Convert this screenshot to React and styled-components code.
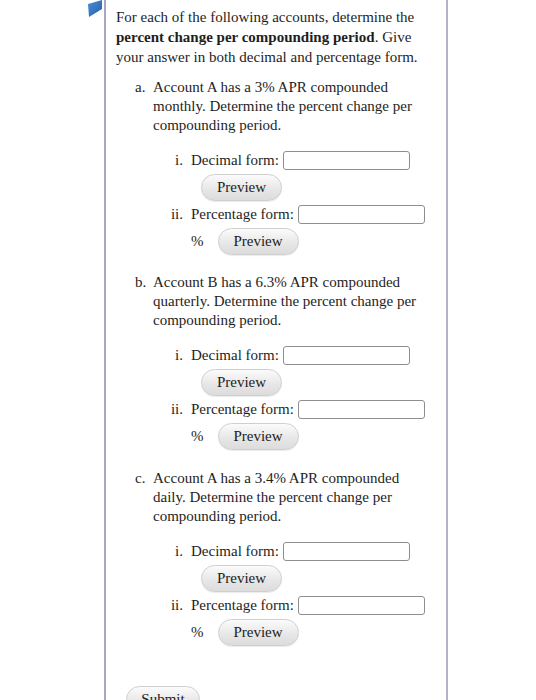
import styled, { createGlobalStyle } from "styled-components";

const GlobalStyle = createGlobalStyle`
  html, body {
    margin: 0;
    padding: 0;
    background: #ffffff;
  }
  body {
    font-family: "Liberation Serif", "Times New Roman", serif;
    font-size: 15px;
    color: #1e1e1e;
  }
`;

const Page = styled.div`
  display: flex;
  align-items: flex-start;
  padding-left: 88px;
  min-height: 700px;
`;

const CornerFlag = styled.svg`
  display: block;
  width: 14px;
  height: 18px;
  margin-right: 2px;
  flex-shrink: 0;
`;

const Panel = styled.div`
  width: 312px;
  min-height: 760px;
  padding: 0 18px 0 10px;
  border-left: 2px solid #a7a7c2;
  border-right: 2px solid #b3b3c6;
`;

const Question = styled.p`
  margin: 7px 0 0;
  line-height: 20px;
`;

const ItemList = styled.ol`
  list-style: none;
  margin: 10.5px 0 0;
  padding: 0 0 0 19px;
`;

const Item = styled.li`
  display: flex;
  margin-bottom: 18.5px;
`;

const ItemLetter = styled.span`
  width: 18px;
  flex-shrink: 0;
  line-height: 19px;
`;

const ItemBody = styled.div`
  flex: 1;
`;

const ItemText = styled.div`
  line-height: 19px;
`;

const SubList = styled.div`
  margin-top: 12px;
`;

const SubRow = styled.div`
  display: flex;
  align-items: center;
  height: 27px;
  padding-left: ${(p) => p.$indent || 0}px;
`;

const SubMarker = styled.span`
  width: 30px;
  margin-right: 8px;
  text-align: right;
  flex-shrink: 0;
`;

const AnswerBox = styled.input`
  box-sizing: border-box;
  width: 127px;
  height: 19px;
  margin: 0 0 0 4px;
  padding: 0 3px;
  border: 1px solid #8e8e8e;
  border-radius: 3px;
  background: #fff;
  font: inherit;
`;

const Percent = styled.span`
  margin-right: 14px;
`;

const PillButton = styled.button`
  box-sizing: border-box;
  width: ${(p) => p.$width || 81}px;
  height: 27px;
  padding: 0;
  border: 1px solid #cfcfcf;
  border-radius: 14px;
  background: linear-gradient(#fbfbfb, #e6e6e6 60%, #dcdcdc);
  font-family: "Liberation Serif", "Times New Roman", serif;
  font-size: 15px;
  color: #222;
  box-shadow: 0 1px 1px rgba(0, 0, 0, 0.08);
`;

const SubmitRow = styled.div`
  margin-top: 40px;
  padding-left: 10px;
`;

const items = [
  {
    letter: "a.",
    text: "Account A has a 3% APR compounded monthly. Determine the percent change per compounding period.",
  },
  {
    letter: "b.",
    text: "Account B has a 6.3% APR compounded quarterly. Determine the percent change per compounding period.",
  },
  {
    letter: "c.",
    text: "Account A has a 3.4% APR compounded daily. Determine the percent change per compounding period.",
  },
];

function AccountItem({ letter, text }) {
  return (
    <Item>
      <ItemLetter>{letter}</ItemLetter>
      <ItemBody>
        <ItemText>{text}</ItemText>
        <SubList>
          <SubRow>
            <SubMarker>i.</SubMarker>
            Decimal form:
            <AnswerBox type="text" />
          </SubRow>
          <SubRow $indent={48}>
            <PillButton type="button">Preview</PillButton>
          </SubRow>
          <SubRow>
            <SubMarker>ii.</SubMarker>
            Percentage form:
            <AnswerBox type="text" />
          </SubRow>
          <SubRow $indent={38}>
            <Percent>%</Percent>
            <PillButton type="button">Preview</PillButton>
          </SubRow>
        </SubList>
      </ItemBody>
    </Item>
  );
}

export default function App() {
  return (
    <>
      <GlobalStyle />
      <Page>
        <CornerFlag viewBox="0 0 14 18">
          <defs>
            <linearGradient id="flagFill" x1="0" y1="0" x2="1" y2="1">
              <stop offset="0" stopColor="#4f8fd6" />
              <stop offset="1" stopColor="#1f5fae" />
            </linearGradient>
          </defs>
          <polygon points="0,4 14,0 14,9 1,17" fill="url(#flagFill)" />
        </CornerFlag>
        <Panel>
          <Question>
            For each of the following accounts, determine the{" "}
            <strong>percent change per compounding period</strong>. Give your
            answer in both decimal and percentage form.
          </Question>
          <ItemList>
            {items.map((item) => (
              <AccountItem key={item.letter} {...item} />
            ))}
          </ItemList>
          <SubmitRow>
            <PillButton type="button" $width={74}>
              Submit
            </PillButton>
          </SubmitRow>
        </Panel>
      </Page>
    </>
  );
}
